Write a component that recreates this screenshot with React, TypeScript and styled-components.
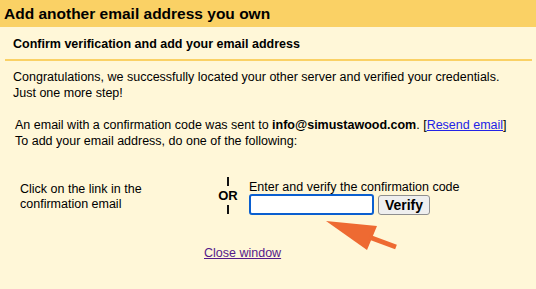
import React, { useState } from 'react';
import styled, { createGlobalStyle } from 'styled-components';

const GlobalStyle = createGlobalStyle`
	html, body {
		margin: 0;
		padding: 0;
		background: #fff7d8;
	}
	body {
		font-family: 'Liberation Sans', Arial, sans-serif;
		color: #000;
	}
`;

const App = () => {
	const [code, setCode] = useState('');

	return (
		<Page>
			<GlobalStyle />
			<TitleBar>Add another email address you own</TitleBar>
			<Content>
				<SubHeader>Confirm verification and add your email address</SubHeader>
				<Intro>
					Congratulations, we successfully located your other server and verified your credentials.
					<br />
					Just one more step!
				</Intro>
				<Notice>
					An email with a confirmation code was sent to <b>info@simustawood.com</b>. [
					<Link href="#">Resend email</Link>]
					<br />
					To add your email address, do one of the following:
				</Notice>
				<Options>
					<OptionLeft>
						Click on the link in the
						<br />
						confirmation email
					</OptionLeft>
					<OrDivider>
						<OrLine />
						<OrText>OR</OrText>
						<OrLine />
					</OrDivider>
					<OptionRight>
						<div>Enter and verify the confirmation code</div>
						<CodeRow>
							<CodeInput value={code} onChange={(e) => setCode(e.target.value)} />
							<VerifyButton>Verify</VerifyButton>
						</CodeRow>
						<Arrow width="80" height="36" viewBox="0 0 80 36">
							<polygon points="1,1 52,6 42,30" fill="#ee6a32" />
							<line x1="44" y1="17" x2="71" y2="27" stroke="#ee6a32" strokeWidth="5" />
						</Arrow>
					</OptionRight>
				</Options>
				<Footer>
					<CloseLink href="#">Close window</CloseLink>
				</Footer>
			</Content>
		</Page>
	);
};

const Page = styled.div`
	width: 536px;
	height: 289px;
	background: #fff7d8;
	overflow: hidden;
`;

const TitleBar = styled.div`
	height: 27px;
	background: #fad165;
	padding-left: 4px;
	font-size: 15.5px;
	font-weight: bold;
	line-height: 28px;
`;

const Content = styled.div`
	padding: 0 4px 0 5px;
	font-size: 12.5px;
`;

const SubHeader = styled.div`
	height: 32px;
	line-height: 35px;
	padding-left: 8px;
	font-weight: bold;
	border-bottom: 2px solid #fad165;
`;

const Intro = styled.p`
	margin: 0;
	padding: 8px 0 0 8px;
	line-height: 16px;
`;

const Notice = styled.p`
	margin: 0;
	padding: 16px 0 0 10px;
	line-height: 16px;
`;

const Link = styled.a`
	color: #2323e6;
`;

const Options = styled.div`
	display: flex;
	align-items: flex-start;
	padding: 28px 0 0 15px;
	line-height: 15px;
`;

const OptionLeft = styled.div`
	width: 198px;
	padding-top: 5px;
`;

const OrDivider = styled.div`
	display: flex;
	flex-direction: column;
	align-items: center;
	width: 30px;
	margin-left: -5px;
`;

const OrLine = styled.div`
	width: 2px;
	height: 9px;
	background: #111;
`;

const OrText = styled.div`
	font-weight: bold;
	font-size: 13px;
	line-height: 19px;
`;

const OptionRight = styled.div`
	position: relative;
	margin-left: 6px;
	padding-top: 3px;
`;

const CodeRow = styled.div`
	display: flex;
	align-items: center;
	gap: 4px;
	margin-top: -1px;
`;

const CodeInput = styled.input`
	box-sizing: border-box;
	width: 125px;
	height: 21px;
	border: 2px solid #0a5fd0;
	border-radius: 3px;
	background: #fff;
	outline: none;
	padding: 0 4px;
	font: 13px 'Liberation Sans', Arial, sans-serif;
`;

const VerifyButton = styled.button`
	box-sizing: border-box;
	width: 52px;
	height: 20px;
	border: 1px solid #8f8f8f;
	border-radius: 3px;
	background: #efefef;
	font: bold 14px 'Liberation Sans', Arial, sans-serif;
	padding: 0;
	color: #000;
`;

const Arrow = styled.svg`
	position: absolute;
	left: 76px;
	top: 43px;
`;

const Footer = styled.div`
	padding: 30px 0 0 199px;
	line-height: 16px;
`;

const CloseLink = styled.a`
	color: #551a8b;
`;

export default App;
